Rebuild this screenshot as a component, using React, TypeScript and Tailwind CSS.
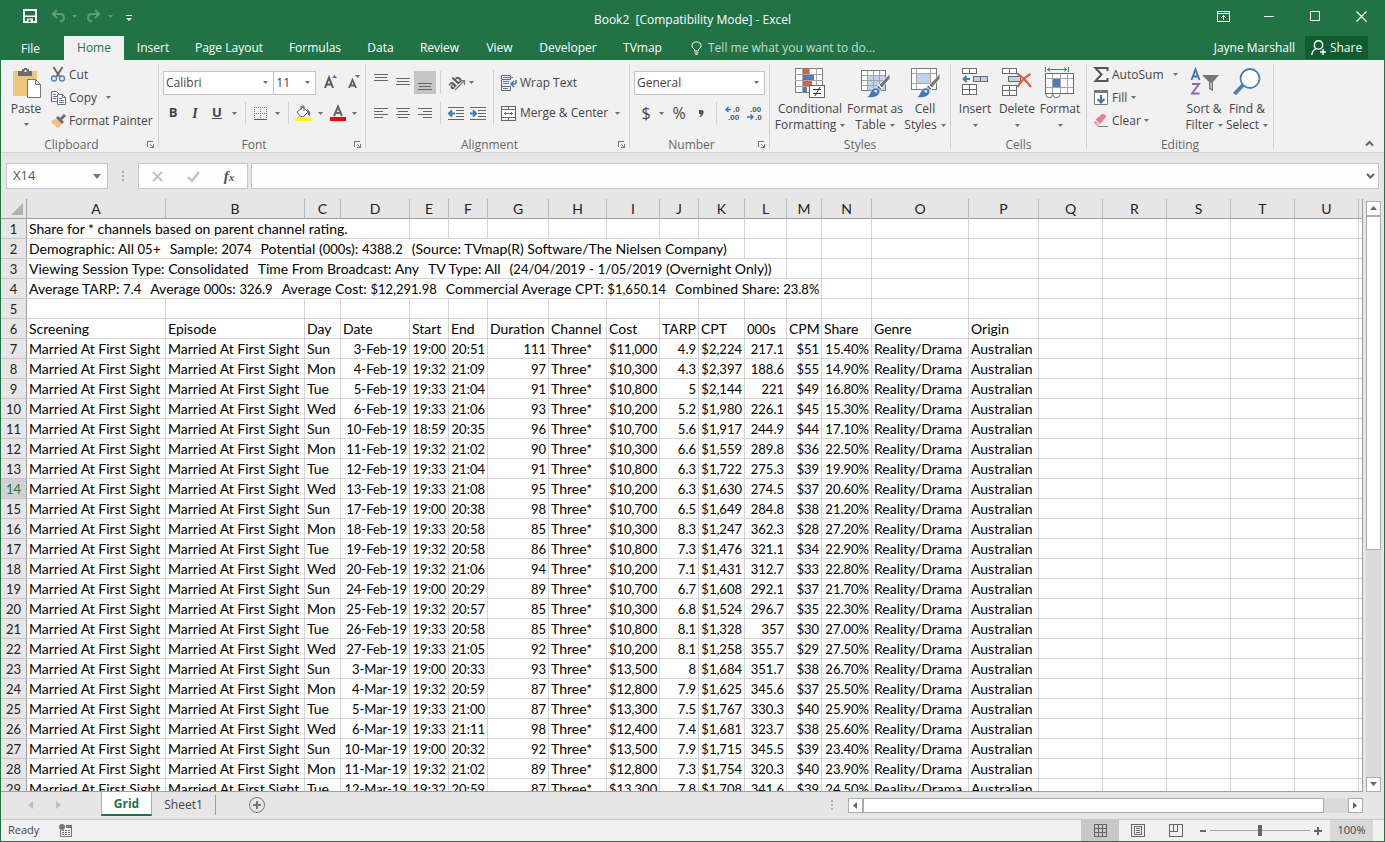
import React from 'react';

// Fuentes compartidas: interfaz y celdas
const UI_FONT = "font-['Open_Sans','Noto_Sans',sans-serif]";
const CELL_FONT = "font-['Lato','Open_Sans',sans-serif]";

/* ---------- Datos ---------- */

const TABS = [
    { label: 'Home', width: 'w-[60px]' },
    { label: 'Insert', width: 'w-[58px]' },
    { label: 'Page Layout', width: 'w-[94px]' },
    { label: 'Formulas', width: 'w-[78px]' },
    { label: 'Data', width: 'w-[53px]' },
    { label: 'Review', width: 'w-[65px]' },
    { label: 'View', width: 'w-[55px]' },
    { label: 'Developer', width: 'w-[82px]' },
    { label: 'TVmap', width: 'w-[67px]' },
];

const COLUMNS: [string, string][] = [
    ['A', 'w-[139px]'], ['B', 'w-[139px]'], ['C', 'w-[36px]'], ['D', 'w-[69px]'], ['E', 'w-[39px]'],
    ['F', 'w-[39px]'], ['G', 'w-[61px]'], ['H', 'w-[58px]'], ['I', 'w-[53px]'], ['J', 'w-[39px]'],
    ['K', 'w-[46px]'], ['L', 'w-[42px]'], ['M', 'w-[35px]'], ['N', 'w-[50px]'], ['O', 'w-[97px]'],
    ['P', 'w-[70px]'], ['Q', 'w-16'], ['R', 'w-16'], ['S', 'w-16'], ['T', 'w-16'], ['U', 'w-16'],
];

// Texto largo que ocupa varias columnas
const INTRO = [
    { parts: ['Share for * channels based on parent channel rating.'], span: 4 },
    { parts: ['Demographic: All 05+', 'Sample: 2074', 'Potential (000s): 4388.2', '(Source: TVmap(R) Software/The Nielsen Company)'], span: 11 },
    { parts: ['Viewing Session Type: Consolidated', 'Time From Broadcast: Any', 'TV Type: All', '(24/04/2019 - 1/05/2019 (Overnight Only))'], span: 12 },
    { parts: ['Average TARP: 7.4', 'Average 000s: 326.9', 'Average Cost: $12,291.98', 'Commercial Average CPT: $1,650.14', 'Combined Share: 23.8%'], span: 13 },
];

const FIELDS = ['Screening', 'Episode', 'Day', 'Date', 'Start', 'End', 'Duration', 'Channel', 'Cost', 'TARP', 'CPT', '000s', 'CPM', 'Share', 'Genre', 'Origin'];

// Day | Date | Start | End | Duration | Cost | TARP | CPT | 000s | CPM | Share
const SCREENINGS = `Sun|3-Feb-19|19:00|20:51|111|$11,000|4.9|$2,224|217.1|$51|15.40%
Mon|4-Feb-19|19:32|21:09|97|$10,300|4.3|$2,397|188.6|$55|14.90%
Tue|5-Feb-19|19:33|21:04|91|$10,800|5|$2,144|221|$49|16.80%
Wed|6-Feb-19|19:33|21:06|93|$10,200|5.2|$1,980|226.1|$45|15.30%
Sun|10-Feb-19|18:59|20:35|96|$10,700|5.6|$1,917|244.9|$44|17.10%
Mon|11-Feb-19|19:32|21:02|90|$10,300|6.6|$1,559|289.8|$36|22.50%
Tue|12-Feb-19|19:33|21:04|91|$10,800|6.3|$1,722|275.3|$39|19.90%
Wed|13-Feb-19|19:33|21:08|95|$10,200|6.3|$1,630|274.5|$37|20.60%
Sun|17-Feb-19|19:00|20:38|98|$10,700|6.5|$1,649|284.8|$38|21.20%
Mon|18-Feb-19|19:33|20:58|85|$10,300|8.3|$1,247|362.3|$28|27.20%
Tue|19-Feb-19|19:32|20:58|86|$10,800|7.3|$1,476|321.1|$34|22.90%
Wed|20-Feb-19|19:32|21:06|94|$10,200|7.1|$1,431|312.7|$33|22.80%
Sun|24-Feb-19|19:00|20:29|89|$10,700|6.7|$1,608|292.1|$37|21.70%
Mon|25-Feb-19|19:32|20:57|85|$10,300|6.8|$1,524|296.7|$35|22.30%
Tue|26-Feb-19|19:33|20:58|85|$10,800|8.1|$1,328|357|$30|27.00%
Wed|27-Feb-19|19:33|21:05|92|$10,200|8.1|$1,258|355.7|$29|27.50%
Sun|3-Mar-19|19:00|20:33|93|$13,500|8|$1,684|351.7|$38|26.70%
Mon|4-Mar-19|19:32|20:59|87|$12,800|7.9|$1,625|345.6|$37|25.50%
Tue|5-Mar-19|19:33|21:00|87|$13,300|7.5|$1,767|330.3|$40|25.90%
Wed|6-Mar-19|19:33|21:11|98|$12,400|7.4|$1,681|323.7|$38|25.60%
Sun|10-Mar-19|19:00|20:32|92|$13,500|7.9|$1,715|345.5|$39|23.40%
Mon|11-Mar-19|19:32|21:02|89|$12,800|7.3|$1,754|320.3|$40|23.90%
Tue|12-Mar-19|19:32|20:59|87|$13,300|7.8|$1,708|341.6|$39|24.50%`
    .split('\n')
    .map(line => {
        const v = line.split('|');
        return ['Married At First Sight', 'Married At First Sight', ...v.slice(0, 5), 'Three*', ...v.slice(5), 'Reality/Drama', 'Australian'];
    });

const LEFT_ALIGNED = [0, 1, 2, 7, 14, 15];

/* ---------- Piezas pequeñas ---------- */

interface IconProps {
    w: number;
    h: number;
    crisp?: boolean;
    className?: string;
    children: React.ReactNode;
}
const Icon: React.FC<IconProps> = ({ w, h, crisp, className = '', children }) => (
    <svg width={w} height={h} viewBox={`0 0 ${w} ${h}`} fill="none" shapeRendering={crisp ? 'crispEdges' : 'auto'} className={`shrink-0 overflow-visible ${className}`} aria-hidden="true">
        {children}
    </svg>
);

const Caret: React.FC<{ className?: string; color?: string }> = ({ className = '', color = '#6f6f6f' }) => (
    <Icon w={5} h={3} className={className}><path d="M0 0h5L2.5 3z" fill={color} /></Icon>
);

const Divider: React.FC<{ className?: string }> = ({ className = '' }) => (
    <span className={`w-px shrink-0 bg-[#d0d0d0] ${className}`} />
);

interface GroupProps {
    label: string;
    className: string;
    launcher?: boolean;
    children: React.ReactNode;
}
const Group: React.FC<GroupProps> = ({ label, className, launcher, children }) => (
    <section aria-label={label} className={`flex shrink-0 flex-col ${className}`}>
        <div className="flex h-[76px] shrink-0">{children}</div>
        <div className="flex h-[17px] items-center">
            <span className="flex-1 text-center text-[#666]">{label}</span>
            {launcher && (
                <button aria-label={`${label} settings`} className="flex h-4 w-4 items-center justify-center">
                    <Icon w={7} h={7} crisp><path d="M0 .5h6M.5 0v6" stroke="#777" /><path d="M3 3l3 3M6.5 3v4M3 6.5h4" stroke="#777" /></Icon>
                </button>
            )}
        </div>
    </section>
);

const SmallButton: React.FC<{ label: string; className?: string; children: React.ReactNode }> = ({ label, className = 'w-[22px]', children }) => (
    <button aria-label={label} className={`flex h-full shrink-0 items-center justify-center ${className}`}>{children}</button>
);

interface BigButtonProps {
    icon: React.ReactNode;
    lines: string[];
    className: string;
}
const BigButton: React.FC<BigButtonProps> = ({ icon, lines, className }) => (
    <button className={`flex shrink-0 flex-col items-center whitespace-nowrap pt-2 leading-4 ${className}`}>
        <span className="flex h-[33px] items-start justify-center">{icon}</span>
        <span>{lines[0]}</span>
        <span className="flex h-4 items-center gap-1">{lines[1]}<Caret /></span>
    </button>
);

const RowButton: React.FC<{ icon: React.ReactNode; label: string; caret?: string }> = ({ icon, label, caret }) => (
    <button className="flex h-[23px] items-center whitespace-nowrap">
        <span className="flex w-[18px] items-center">{icon}</span>
        <span>{label}</span>
        {caret && <Caret className={caret} />}
    </button>
);

/* ---------- Iconos ---------- */

const PasteIcon = () => (
    <Icon w={29} h={31}>
        <path d="M0 3h24v25H0z" fill="#eec67d" />
        <path d="M5 3h4V1h2V0h3v1h2v2h3v5H5z" fill="#6d6d6d" />
        <path d="M11.500 2h2v2h-2z" fill="#f0f0f0" />
        <path d="M14.5 11.5h8l5 5v13h-13z" fill="#fff" stroke="#777" />
        <path d="M22.5 11.5v5h5" stroke="#777" />
    </Icon>
);
const CutIcon = () => (
    <Icon w={14} h={15}>
        <path d="M2.500 0l6 9.500M11.500 0l-6 9.500" stroke="#6a6a6a" strokeWidth="2" />
        <circle cx="3" cy="11.5" r="2.5" stroke="#4a7ebb" strokeWidth="1.3" />
        <circle cx="11" cy="11.5" r="2.5" stroke="#4a7ebb" strokeWidth="1.3" />
    </Icon>
);
const CopyIcon = () => (
    <Icon w={16} h={14}>
        <path d="M.5.5h5l3 3v7h-8z" fill="#fff" stroke="#6f6f6f" />
        <path d="M2 3.5h3M2 5.5h4M2 7.5h3" stroke="#4a7ebb" />
        <path d="M6.5 3.5h5l3 3v7h-8z" fill="#fff" stroke="#6f6f6f" />
        <path d="M11.5 3.5v3h3" stroke="#6f6f6f" />
        <path d="M8 7.5h3M8 9.5h5M8 11.5h5" stroke="#4a7ebb" />
    </Icon>
);
const PainterIcon = () => (
    <Icon w={16} h={14}>
        <path d="M0 7l5-2 6 5-4 4-2-1-1-2-2-1z" fill="#eec07b" />
        <path d="M5 4l2-2 6 6-2 2z" fill="#6a6a6a" />
        <path d="M10 5l4-4" stroke="#6a6a6a" strokeWidth="3" />
    </Icon>
);
const GrowFontIcon = () => (
    <Icon w={14} h={16}>
        <path d="M1 13L5 2.5 9 13M2.5 9.500h5" stroke="#5a5a5a" strokeWidth="2" />
        <path d="M8 3h5l-2.500-3z" fill="#3e78b8" />
    </Icon>
);
const ShrinkFontIcon = () => (
    <Icon w={13} h={16}>
        <path d="M1 13l3.500-8L8 13M2.500 10.500h4" stroke="#5a5a5a" strokeWidth="1.800" />
        <path d="M7 0h5L9.500 3z" fill="#3e78b8" />
    </Icon>
);
const BordersIcon = () => (
    <Icon w={13} h={13} crisp>
        <path d="M0 .5h13M0 6.5h13M.5 0v12M6.5 0v12M12.5 0v12" stroke="#777" strokeDasharray="1 1" />
        <path d="M0 12.5h13" stroke="#555" />
    </Icon>
);
const FillColorIcon = () => (
    <Icon w={16} h={16}>
        <path d="M2 7l6-5 5 5-5 5-3-1z" fill="#fff" stroke="#666" />
        <path d="M6 5V1h3v5" stroke="#666" />
        <path d="M12 4q4 2 3 7l-2-1z" fill="#3e78b8" />
        <path d="M0 12h16v4H0z" fill="#ff0" />
    </Icon>
);
const FontColorIcon = () => (
    <Icon w={16} h={16}>
        <path d="M4 11L8 1.500l4 9.500M5 8h6" stroke="#666" strokeWidth="2" />
        <path d="M0 12h16v4H0z" fill="#f00" />
    </Icon>
);
const AlignIcon: React.FC<{ rows: [number, number][]; top?: number }> = ({ rows, top = 0 }) => (
    <Icon w={14} h={20} crisp>
        {rows.map(([x, len], i) => <path key={i} d={`M${x} ${top + i * 3 + 0.5}h${len}`} stroke="#666" />)}
    </Icon>
);
const OrientationIcon = () => (
    <Icon w={17} h={16}>
        <text x="-1" y="13" transform="rotate(-45 4 9)" fontSize="12" fontWeight="700" fill="#555">ab</text>
        <path d="M6 15l9-9M11 5.5h4.5V10" stroke="#777" strokeWidth="1.2" />
    </Icon>
);
const IndentIcon: React.FC<{ flip?: boolean }> = ({ flip }) => (
    <Icon w={16} h={13} crisp>
        <path d="M0 .5h16M8 3.5h8M8 6.5h8M8 9.5h8M0 12.5h16" stroke="#666" />
        <g shapeRendering="auto">
            <path d={flip ? 'M0 6.5h5M3 3.5l3 3-3 3' : 'M7 6.5H2M4 3.5l-3 3 3 3'} stroke="#3e78b8" strokeWidth="2" />
        </g>
    </Icon>
);
const WrapIcon = () => (
    <Icon w={16} h={16}>
        <path d="M.5.5h9v4h-9zM.5 4.5v11h9v-4M.5 11.5h9" stroke="#666" />
        <path d="M2 2.5h10M2 6.5h6M2 8.5h6M2 13.5h5" stroke="#4a7ebb" />
        <path d="M15 5v2.500q0 1.500-2 1.500h-2.500M13 6l-3 3 3 3" stroke="#3e78b8" strokeWidth="1.5" />
    </Icon>
);
const MergeIcon = () => (
    <Icon w={15} h={15} crisp>
        <path d="M.5.5h14v14H.5zM0 3.5h15M0 11.5h15M7.5 0v4M7.5 11v4" stroke="#666" />
        <path d="M1 4h13v7H1z" fill="#fff" />
        <path d="M3 7.5h9M4.5 6v3M10.5 6v3" stroke="#3e78b8" />
    </Icon>
);
const DECIMAL_TEXT = { fontFamily: 'Liberation Sans', fontSize: 8, fontWeight: 700, fill: '#555' };
const MoreDecimalsIcon = () => (
    <Icon w={15} h={16}>
        <path d="M6 4.500H1M3.500 2L1 4.500 3.500 7" stroke="#3e78b8" strokeWidth="1.5" />
        <text x="8" y="7" {...DECIMAL_TEXT}>.0</text>
        <text x="3" y="15" {...DECIMAL_TEXT}>.00</text>
    </Icon>
);
const LessDecimalsIcon = () => (
    <Icon w={15} h={16}>
        <text x="3" y="7" {...DECIMAL_TEXT}>.00</text>
        <text x="8" y="15" {...DECIMAL_TEXT}>.0</text>
        <path d="M0 12h5.500M3.500 9.500L6 12l-2.500 2.500" stroke="#3e78b8" strokeWidth="1.5" />
    </Icon>
);
const CondFormatIcon = () => (
    <Icon w={31} h={30} crisp>
        <path d="M.5.5h27v24H.5z" fill="#fff" stroke="#7a7a7a" />
        <path d="M0 6.5h28M0 12.5h28M0 18.5h28M7.5 0v25M14.5 0v25M21.5 0v25" stroke="#a5a5a5" />
        <path d="M8 1h6v5H8zM8 13h9v5H8z" fill="#dc6141" />
        <path d="M8 7h11v5H8zM8 19h4v5H8z" fill="#4a7ebb" />
        <path d="M14.5 17.5h15v12h-15z" fill="#fff" stroke="#666" />
        <path d="M18 21.5h8M18 25.5h8M25 19l-5 9" stroke="#333" shapeRendering="auto" />
    </Icon>
);
// Pincel que se superpone a las tablas de la galería de estilos
const Brush = () => (
    <g transform="translate(6 0)">
        <path d="M23 5.500v5l-8 9.500-3-3z" fill="#777" stroke="#fff" strokeWidth=".8" />
        <path d="M11 17l4 4-2 1.500-3.500-3.500z" fill="#6f6f6f" stroke="#fff" strokeWidth=".8" />
        <path d="M0 29c4-2 3-8 8-9 4-.5 6 3 4 6-3 4-8 4-12 3z" fill="#3e78b8" stroke="#fff" strokeWidth=".5" />
        <path d="M6.500 23q2-2 4 0l-1 2z" fill="#dbe7f5" />
    </g>
);
const FormatTableIcon = () => (
    <Icon w={29} h={30}>
        <g shapeRendering="crispEdges">
            <path d="M.5 2.5h24v20H.5z" fill="#fff" stroke="#7a7a7a" />
            <path d="M7 8h17v14H7z" fill="#bdd2ec" />
            <path d="M1 7.5h23M1 12.5h23M1 17.5h23M6.5 3v19M12.5 3v19M18.5 3v19" stroke="#a5a5a5" />
        </g>
        <Brush />
    </Icon>
);
const CellStylesIcon = () => (
    <Icon w={29} h={30}>
        <g shapeRendering="crispEdges">
            <path d="M.5.5h25v21H.5z" fill="#fff" stroke="#7a7a7a" />
            <path d="M1 5.5h24M1 15.5h24M5.5 1v20M19.5 1v20" stroke="#a5a5a5" />
            <path d="M6 6h13v9H6z" fill="#bdd2ec" />
        </g>
        <Brush />
    </Icon>
);
const InsertIcon = () => (
    <Icon w={26} h={28} crisp>
        <path d="M.5.5h14v5H.5zM.5 16.5h14v10H.5z" fill="#fff" stroke="#6a6a6a" />
        <path d="M7.5 0v6M7.5 16v11M0 21.5h15" stroke="#6a6a6a" />
        <path d="M11.5 8.5h14v5h-14z" fill="#bdd2ec" stroke="#6a6a6a" />
        <path d="M18.5 8v6" stroke="#6a6a6a" />
        <path d="M8 11H2M4.500 8L1.500 11l3 3" stroke="#3e78b8" strokeWidth="1.8" shapeRendering="auto" />
    </Icon>
);
const DeleteIcon = () => (
    <Icon w={30} h={28} crisp>
        <path d="M.5.5h14v5H.5zM.5 17.5h14v10H.5z" fill="#fff" stroke="#6a6a6a" />
        <path d="M7.5 0v6M7.5 17v11M0 22.5h15" stroke="#6a6a6a" />
        <path d="M6.5 8.5h12v5h-12z" fill="#bdd2ec" stroke="#6a6a6a" />
        <path d="M15 5.5Q22 10 29 19M28.5 6Q20 11 15.5 19" stroke="#dc6141" strokeWidth="2.2" shapeRendering="auto" />
    </Icon>
);
const FormatIcon = () => (
    <Icon w={30} h={32}>
        <g shapeRendering="crispEdges">
            <path d="M.5 5.5h28v20H.5z" fill="#fff" stroke="#6a6a6a" />
            <path d="M1 10.5h27M1 19.5h27M7.5 6v19M15.5 6v19M22.5 6v19" stroke="#a5a5a5" />
            <path d="M8 11h7v8H8z" fill="#4a7ebb" />
            <path d="M.5-1v5M23.500-1v5M2 1.5h20" stroke="#3e78b8" />
        </g>
        <path d="M5-.5l-2.500 2L5 3.500M19-.5l2.500 2-2.500 2" stroke="#3e78b8" />
        <path d="M1 26q0 4 4 3.500 2 0 2.500-3M8 26q0 4 4 3.500 3 0 3-3" fill="#fff" stroke="#6a6a6a" />
    </Icon>
);
const SigmaIcon = () => <Icon w={15} h={15}><path d="M13.500 4V1H1.500l6 6.500-6 6.500h12v-3" stroke="#555" strokeWidth="2" /></Icon>;
const FillIcon = () => (
    <Icon w={14} h={15}>
        <path d="M.5.5h13v14H.5z" fill="#fff" stroke="#777" />
        <path d="M0 0h14v3H0z" fill="#777" />
        <path d="M7 5v7M3.500 9L7 12.500 10.500 9" stroke="#3e78b8" strokeWidth="2" />
    </Icon>
);
const ClearIcon = () => (
    <Icon w={14} h={13}>
        <path d="M8 0h2l2.500 2.500L6 10 1.500 5.500z" fill="#e77f92" />
        <path d="M1 6.500L5 10.500 4 12H3L0 9V8z" fill="#eb9aaa" />
        <path d="M4 12.5h10" stroke="#777" />
    </Icon>
);
const SortIcon = () => (
    <Icon w={29} h={30}>
        <path d="M1.500 12L5.500 1.500 9.500 12M3 8.500h5" stroke="#3e78b8" strokeWidth="1.9" />
        <path d="M2 16h7L2 25.500h7.500" stroke="#9460bb" strokeWidth="1.9" />
        <path d="M12 7h17l-6 7v9l-4-2v-7z" fill="#777" />
        <path d="M20.500 14.500v5.500l1 .5v-6z" fill="#fff" />
    </Icon>
);
const FindIcon = () => (
    <Icon w={28} h={28}>
        <path d="M10 17L1.500 26" stroke="#4a7ebb" strokeWidth="4" />
        <circle cx="17" cy="10.5" r="9.500" fill="#fff" stroke="#4a7ebb" strokeWidth="1.8" />
    </Icon>
);

/* ---------- Barra de título y pestañas ---------- */

const TitleBar: React.FC = () => (
    <div className="grid h-9 shrink-0 grid-cols-[1fr_auto_1fr]">
        <div className="flex h-8 items-center pl-[22px]">
            <button aria-label="Save">
                <Icon w={14} h={14}>
                    <path d="M1 1h12v12H1z" stroke="#fff" strokeWidth="2" />
                    <path d="M2 6.5h10v1.5H2zM4 9.500h6V14H4z" fill="#fff" />
                    <path d="M5.500 10.500h2V13h-2z" fill="#217346" />
                </Icon>
            </button>
            <button aria-label="Undo" className="ml-[14px] flex items-center gap-[7px]">
                <Icon w={14} h={14}><path d="M6 1L2 5l4 4M2 5h7q4 0 4 4 0 3-4 3.500" stroke="#5f9c79" strokeWidth="2" /></Icon>
                <Caret color="#5f9c79" />
            </button>
            <button aria-label="Redo" className="ml-[10px] flex items-center gap-[7px]">
                <Icon w={14} h={14}><path d="M8 1l4 4-4 4M12 5H5Q1 5 1 9q0 3 4 3.500" stroke="#5f9c79" strokeWidth="2" /></Icon>
                <Caret color="#5f9c79" />
            </button>
            <button aria-label="Customize toolbar" className="ml-[13px] pt-1">
                <Icon w={6} h={7}><path d="M0 .5h6" stroke="#fff" /><path d="M0 3h6L3 6z" fill="#fff" /></Icon>
            </button>
        </div>
        <h1 className="self-center whitespace-pre pt-1">Book2  [Compatibility Mode] - Excel</h1>
        <div className="flex h-8 justify-end">
            <SmallButton label="Ribbon display options" className="w-[46px]">
                <Icon w={13} h={11} crisp><path d="M.5.5h12v10H.5zM0 2.5h13M6.5 4v5M5 5.5h3M4 6.5h1M8 6.5h1" stroke="#fff" /></Icon>
            </SmallButton>
            <SmallButton label="Minimize" className="w-[46px]"><Icon w={10} h={1} crisp><path d="M0 .5h10" stroke="#fff" /></Icon></SmallButton>
            <SmallButton label="Maximize" className="w-[46px]"><Icon w={10} h={10} crisp><path d="M.5.5h9v9h-9z" stroke="#fff" /></Icon></SmallButton>
            <SmallButton label="Close" className="w-[46px]"><Icon w={11} h={11}><path d="M.5.5l10 10M10.5.5l-10 10" stroke="#fff" strokeWidth="1.2" /></Icon></SmallButton>
        </div>
    </div>
);

const TabBar: React.FC = () => (
    <nav className="flex h-6 shrink-0 whitespace-nowrap pr-4">
        <button className="w-[63px] pr-1 pt-px">File</button>
        {TABS.map((tab, i) => (
            <button key={tab.label} className={`shrink-0 ${tab.width} ${i === 0 ? 'bg-[#f1f1f1] text-[#217346]' : ''}`}>{tab.label}</button>
        ))}
        <button className="ml-[15px] flex items-center gap-[6px] text-[#c4dccf]">
            <Icon w={11} h={14}><path d="M3.5 10V8.500Q1 7 1 4.800 1 1 5.500 1T10 4.800Q10 7 7.500 8.500V10zM3.500 12h4M4.500 13.500h2" stroke="#fff" /></Icon>
            Tell me what you want to do...
        </button>
        <button className="ml-auto mr-[10px]">Jayne Marshall</button>
        <button className="mb-px flex w-[63px] items-center justify-center gap-1 bg-[#0e5c2f]">
            <Icon w={15} h={15}><circle cx="7.5" cy="5" r="4.200" stroke="#fff" strokeWidth="1.4" /><path d="M5 8.500Q1 11 .8 15M9 12h6M12 9v6" stroke="#fff" strokeWidth="1.4" /></Icon>
            Share
        </button>
    </nav>
);

/* ---------- Cinta de opciones ---------- */

const SelectBox: React.FC<{ label: string; value: string; className: string }> = ({ label, value, className }) => (
    <div className={`relative h-6 border border-[#c3c3c3] bg-white ${className}`}>
        <select aria-label={label} defaultValue={value} className="h-full w-full appearance-none bg-transparent pl-[2px] outline-none">
            <option>{value}</option>
        </select>
        <Caret className="pointer-events-none absolute right-[5px] top-[9px]" />
    </div>
);

const Ribbon: React.FC = () => (
    <div className="flex h-[93px] shrink-0 border-b border-[#d2d2d2] bg-[#f1f1f1] text-[#444]">
        <Group label="Clipboard" launcher className="w-[157px]">
            <button className="flex w-[50px] shrink-0 flex-col items-center pt-2 leading-4">
                <span className="ml-[3px] h-[33px]"><PasteIcon /></span>
                Paste
                <Caret className="mt-[6px]" />
            </button>
            <div className="flex flex-col pt-[3px]">
                <RowButton icon={<CutIcon />} label="Cut" />
                <RowButton icon={<CopyIcon />} label="Copy" caret="ml-[9px]" />
                <RowButton icon={<PainterIcon />} label="Format Painter" />
            </div>
        </Group>
        <Divider className="my-1" />

        <Group label="Font" launcher className="w-[206px]">
            <div className="flex w-full flex-col pl-1 pt-[11px]">
                <div className="flex h-6 items-center">
                    <SelectBox label="Font" value="Calibri" className="w-28" />
                    <SelectBox label="Font size" value="11" className="-ml-px w-[43px]" />
                    <SmallButton label="Increase font size" className="ml-[3px] w-6"><GrowFontIcon /></SmallButton>
                    <SmallButton label="Decrease font size"><ShrinkFontIcon /></SmallButton>
                </div>
                <div className="mt-[7px] flex h-[22px] items-center">
                    <SmallButton label="Bold" className="w-5 text-[13px] font-bold">B</SmallButton>
                    <SmallButton label="Italic" className="w-6 font-['Liberation_Serif',serif] text-[14px] font-bold italic">I</SmallButton>
                    <SmallButton label="Underline" className="w-5 text-[13px] font-bold underline">U</SmallButton>
                    <Caret className="ml-[5px]" />
                    <Divider className="ml-2 h-full" />
                    <SmallButton label="Borders" className="w-[29px]"><BordersIcon /></SmallButton>
                    <Caret />
                    <Divider className="ml-2 h-full" />
                    <SmallButton label="Fill colour" className="w-7"><FillColorIcon /></SmallButton>
                    <Caret className="ml-px" />
                    <SmallButton label="Font colour" className="ml-[2px] w-[26px]"><FontColorIcon /></SmallButton>
                    <Caret className="ml-px" />
                </div>
            </div>
        </Group>
        <Divider className="my-1" />

        <Group label="Alignment" launcher className="w-[263px]">
            <div className="flex w-[127px] shrink-0 flex-col pl-1 pt-[11px]">
                <div className="flex h-[23px] items-center">
                    <SmallButton label="Top align"><AlignIcon top={1} rows={[[0, 14], [1, 12], [0, 14]]} /></SmallButton>
                    <SmallButton label="Middle align"><AlignIcon top={5} rows={[[0, 14], [1, 12], [0, 14]]} /></SmallButton>
                    <SmallButton label="Bottom align" className="w-[22px] bg-[#c5c5c5]"><AlignIcon top={10} rows={[[0, 14], [1, 12], [0, 14]]} /></SmallButton>
                    <Divider className="ml-1 h-full" />
                    <SmallButton label="Orientation" className="ml-1 w-6"><OrientationIcon /></SmallButton>
                    <Caret />
                </div>
                <div className="mt-2 flex h-[22px] items-center">
                    <SmallButton label="Align left"><AlignIcon top={5} rows={[[0, 14], [0, 9], [0, 14], [0, 9]]} /></SmallButton>
                    <SmallButton label="Center"><AlignIcon top={5} rows={[[0, 14], [2, 10], [0, 14], [2, 10]]} /></SmallButton>
                    <SmallButton label="Align right"><AlignIcon top={5} rows={[[0, 14], [5, 9], [0, 14], [5, 9]]} /></SmallButton>
                    <Divider className="ml-1 h-full" />
                    <SmallButton label="Decrease indent" className="ml-1 w-[22px]"><IndentIcon /></SmallButton>
                    <SmallButton label="Increase indent"><IndentIcon flip /></SmallButton>
                </div>
            </div>
            <Divider className="mb-[11px] mt-[10px] h-[55px]" />
            <div className="flex flex-1 flex-col whitespace-nowrap pl-[7px] pt-[11px]">
                <button className="flex h-[23px] items-center gap-[3px]"><WrapIcon />Wrap Text</button>
                <button className="mt-2 flex h-[22px] items-center gap-1 pr-[9px]"><MergeIcon />Merge &amp; Center<Caret className="ml-auto" /></button>
            </div>
        </Group>
        <Divider className="my-1" />

        <Group label="Number" launcher className="w-[139px]">
            <div className="flex flex-1 flex-col px-1 pt-[11px]">
                <SelectBox label="Number format" value="General" className="w-full" />
                <div className="mt-[7px] flex h-[22px] items-center">
                    <SmallButton label="Currency" className="w-6 text-[16px]">$</SmallButton>
                    <Caret className="ml-px" />
                    <SmallButton label="Percent" className="ml-[3px] w-6 text-[16px]">%</SmallButton>
                    <SmallButton label="Comma style" className="w-5"><Icon w={6} h={9}><path d="M1 1h3q2 0 1.500 3T1 8.500Q3 6.500 2.500 5H1z" fill="#555" /></Icon></SmallButton>
                    <Divider className="ml-[5px] h-full" />
                    <SmallButton label="Increase decimal" className="ml-1 w-[22px]"><MoreDecimalsIcon /></SmallButton>
                    <SmallButton label="Decrease decimal"><LessDecimalsIcon /></SmallButton>
                </div>
            </div>
        </Group>
        <Divider className="my-1" />

        <Group label="Styles" className="w-[180px]">
            <BigButton icon={<CondFormatIcon />} lines={['Conditional', 'Formatting']} className="ml-1 w-[72px]" />
            <BigButton icon={<FormatTableIcon />} lines={['Format as', 'Table']} className="w-[58px]" />
            <BigButton icon={<CellStylesIcon />} lines={['Cell', 'Styles']} className="w-[42px]" />
        </Group>
        <Divider className="my-1" />

        <Group label="Cells" className="w-[135px]">
            <BigButton icon={<InsertIcon />} lines={['Insert', '']} className="ml-1 w-10" />
            <BigButton icon={<DeleteIcon />} lines={['Delete', '']} className="w-11" />
            <BigButton icon={<FormatIcon />} lines={['Format', '']} className="w-[42px]" />
        </Group>
        <Divider className="my-1" />

        <Group label="Editing" className="w-[186px]">
            <div className="flex w-24 shrink-0 flex-col pl-[7px] pt-[3px]">
                <RowButton icon={<SigmaIcon />} label="AutoSum" caret="ml-[9px]" />
                <RowButton icon={<FillIcon />} label="Fill" caret="ml-1" />
                <RowButton icon={<ClearIcon />} label="Clear" caret="ml-[3px]" />
            </div>
            <BigButton icon={<SortIcon />} lines={['Sort &', 'Filter']} className="w-[42px]" />
            <BigButton icon={<FindIcon />} lines={['Find &', 'Select']} className="w-11" />
        </Group>
        <Divider className="my-1" />

        <button aria-label="Collapse the ribbon" className="mb-1 ml-auto mr-[10px] self-end">
            <Icon w={9} h={9}><path d="M1 6.5l3.500-3.500L8 6.500" stroke="#666" strokeWidth="2" /></Icon>
        </button>
    </div>
);

/* ---------- Barra de fórmulas ---------- */

const Dots: React.FC = () => (
    <Icon w={2} h={11} crisp><path d="M0 0h2v2H0zM0 4h2v2H0zM0 8h2v2H0z" fill="#b0b0b0" /></Icon>
);

const FormulaBar: React.FC = () => (
    <div className="flex h-[46px] shrink-0 items-start px-[5px] pt-[10px] text-[#555]">
        <div className="flex h-[26px] w-[102px] shrink-0 items-center border border-[#c6c6c6] bg-[#fdfdfd]">
            <input aria-label="Name box" defaultValue="X14" className="w-20 bg-transparent pl-[6px] text-[13px] outline-none" />
            <button aria-label="Open name list" className="ml-auto pr-[6px]"><Icon w={8} h={5}><path d="M0 0h8L4 5z" fill="#777" /></Icon></button>
        </div>
        <span className="flex h-[26px] w-[30px] shrink-0 items-center justify-center"><Dots /></span>
        <div className="mr-[3px] flex h-[26px] w-[110px] shrink-0 items-center border border-[#c6c6c6] bg-[#fdfdfd]">
            <SmallButton label="Cancel" className="w-9"><Icon w={11} h={11}><path d="M1 1l9 9M10 1l-9 9" stroke="#c2c2c2" strokeWidth="2" /></Icon></SmallButton>
            <SmallButton label="Enter" className="w-9"><Icon w={13} h={11}><path d="M1 6l4 4 7-9" stroke="#c2c2c2" strokeWidth="2.4" /></Icon></SmallButton>
            <SmallButton label="Insert function" className="w-9 font-['Liberation_Serif',serif] text-[15px] font-bold italic"><span>f<span className="text-[11px]">x</span></span></SmallButton>
        </div>
        <div className="flex h-[26px] flex-1 items-center border border-[#c6c6c6] bg-[#fdfdfd]">
            <input aria-label="Formula bar" className="min-w-0 flex-1 bg-transparent px-2 outline-none" />
            <button aria-label="Expand formula bar" className="pr-[3px]"><Icon w={9} h={7}><path d="M1 1l3.500 3.500L8 1" stroke="#666" strokeWidth="2" /></Icon></button>
        </div>
    </div>
);

/* ---------- Hoja ---------- */

const CELL = 'h-5 border-b border-r border-[#d4d4d4] p-0 px-[2px] whitespace-nowrap';

// Las cifras van un punto más pequeñas que las letras
const MixedText: React.FC<{ text: string }> = ({ text }) => (
    <span>
        {text.split(/([$\d][\d.,/%]*)/).map((part, i) => (i % 2 ? <span key={i} className="text-[13px]">{part}</span> : part))}
    </span>
);

const Blank: React.FC<{ count: number }> = ({ count }) => (
    <>
        {Array.from({ length: count }, (_, i) => <td key={i} className={CELL} />)}
        <td className="border-b border-[#d4d4d4] p-0" />
    </>
);

const RowHead: React.FC<{ n: number }> = ({ n }) => (
    <th scope="row" className={`h-5 border-b border-r border-b-[#c6c6c6] border-r-[#9f9f9f] p-0 text-center text-[13px] font-normal ${n === 14 ? 'bg-[#d2d2d2] text-[#217346]' : 'bg-[#e6e6e6] text-[#222]'}`}>{n}</th>
);

const Sheet: React.FC = () => (
    <div className={`min-w-0 flex-1 overflow-hidden border-b border-r border-[#9f9f9f] bg-white text-[14px] leading-[18px] text-black ${CELL_FONT}`}>
        <table className="w-full table-fixed border-separate border-spacing-0">
            <colgroup>
                <col className="w-[26px]" />
                {COLUMNS.map(([name, width]) => <col key={name} className={width} />)}
                <col />
            </colgroup>
            <thead>
                <tr className="bg-[#e6e6e6]">
                    <th className="h-5 border-b border-r border-[#9f9f9f] p-0"><Icon w={12} h={12} className="ml-auto mr-[3px]"><path d="M12 0v12H0z" fill="#b1b1b1" /></Icon></th>
                    {COLUMNS.map(([name]) => (
                        <th key={name} scope="col" className="h-5 border-b border-r border-b-[#9f9f9f] border-r-[#b8b8b8] p-0 text-center font-normal text-[#222]">{name}</th>
                    ))}
                    <th className="border-b border-[#9f9f9f] p-0" />
                </tr>
            </thead>
            <tbody>
                {INTRO.map((row, i) => (
                    <tr key={i}>
                        <RowHead n={i + 1} />
                        <td colSpan={row.span} className={CELL}>
                            <div className="flex gap-[9px]">{row.parts.map(part => <MixedText key={part} text={part} />)}</div>
                        </td>
                        <Blank count={21 - row.span} />
                    </tr>
                ))}
                <tr><RowHead n={5} /><Blank count={21} /></tr>
                <tr>
                    <RowHead n={6} />
                    {FIELDS.map(field => <td key={field} className={CELL}><MixedText text={field} /></td>)}
                    <Blank count={5} />
                </tr>
                {SCREENINGS.map((row, i) => (
                    <tr key={i}>
                        <RowHead n={i + 7} />
                        {row.map((value, c) => (
                            <td key={c} className={`${CELL} ${LEFT_ALIGNED.includes(c) ? 'text-left' : 'text-right text-[13px]'}`}>{value}</td>
                        ))}
                        <Blank count={5} />
                    </tr>
                ))}
            </tbody>
        </table>
    </div>
);

const ARROWS = {
    up: 'M0 5l3.500-4L7 5z',
    down: 'M0 1h7L3.500 5z',
    left: 'M5 0v7L1 3.500z',
    right: 'M1 0v7l4-3.500z',
};
const ScrollButton: React.FC<{ dir: keyof typeof ARROWS }> = ({ dir }) => (
    <button aria-label={`Scroll ${dir}`} className="flex h-[15px] w-[15px] shrink-0 items-center justify-center border border-[#ababab] bg-white">
        <Icon w={7} h={7}><path d={ARROWS[dir]} fill="#666" /></Icon>
    </button>
);

const SheetTabs: React.FC = () => (
    <div className="flex h-[27px] shrink-0 items-start pr-[21px]">
        <div className="flex h-[26px] w-[100px] shrink-0 items-center gap-[23px] pl-[27px]">
            <Icon w={5} h={8}><path d="M5 0v8L0 4z" fill="#c0c0c0" /></Icon>
            <Icon w={5} h={8}><path d="M0 0v8l5-4z" fill="#c0c0c0" /></Icon>
        </div>
        <button className="h-6 w-[51px] border-x border-b-2 border-x-[#ababab] border-b-[#217346] bg-white pt-[2px] text-[12px] font-bold text-[#217346]">Grid</button>
        <button className="h-6 w-[63px] pt-[2px] text-[#444]">Sheet1</button>
        <span className="mt-[3px] h-5 w-px bg-[#9f9f9f]" />
        <button aria-label="New sheet" className="ml-8 mt-1">
            <Icon w={18} h={18}><circle cx="9" cy="9" r="7.5" stroke="#777" /><path d="M9 5v8M5 9h8" stroke="#777" strokeWidth="2" /></Icon>
        </button>
        <span className="ml-auto mr-[15px] mt-2"><Dots /></span>
        <div className="mt-[6px] flex h-[15px] w-[515px] shrink-0 bg-[#dadada]">
            <ScrollButton dir="left" />
            <span className="w-[461px] border border-[#ababab] bg-white" />
            <span className="flex-1" />
            <ScrollButton dir="right" />
        </div>
    </div>
);

const StatusBar: React.FC = () => (
    <footer className="flex h-[22px] shrink-0 items-stretch border-t border-[#c6c6c6] bg-[#f1f1f1] text-[11px] text-[#444]">
        <span className="flex w-[58px] items-center pl-[7px]">Ready</span>
        <button aria-label="Record macro">
            <Icon w={14} h={13} crisp>
                <path d="M1.5 5.5v7h11v-11h-5" stroke="#777" />
                <path d="M7 1h6v3H7z" fill="#777" />
                <path d="M3 6.5h8M3 8.5h8M3 10.5h8" stroke="#777" strokeDasharray="2 1" />
                <circle cx="3" cy="3" r="3" fill="#777" shapeRendering="auto" />
            </Icon>
        </button>
        <SmallButton label="Normal view" className="ml-auto w-[38px] bg-[#c8c8c8]"><Icon w={13} h={13} crisp><path d="M.5.5h12v12H.5zM4.5 0v13M8.5 0v13M0 4.5h13M0 8.5h13" stroke="#666" /></Icon></SmallButton>
        <SmallButton label="Page layout view" className="w-[38px]"><Icon w={14} h={13} crisp><path d="M.5.5h13v12H.5zM3.5 2.5h7v8h-7zM5 4.5h4M5 6.5h4M5 8.5h4" stroke="#666" /></Icon></SmallButton>
        <SmallButton label="Page break view" className="w-[38px]"><Icon w={14} h={13} crisp><path d="M.5.5h13v12H.5zM4.5 0v7M8.5 0v7M0 7.5h9" stroke="#666" /></Icon></SmallButton>
        <SmallButton label="Zoom out" className="w-[15px]"><Icon w={6} h={2} crisp><path d="M0 0h6v2H0z" fill="#666" /></Icon></SmallButton>
        <input
            type="range"
            aria-label="Zoom"
            defaultValue={50}
            className="h-full w-[100px] appearance-none bg-transparent [&::-webkit-slider-runnable-track]:h-px [&::-webkit-slider-runnable-track]:bg-[#a5a5a5] [&::-webkit-slider-thumb]:-mt-[5px] [&::-webkit-slider-thumb]:h-[11px] [&::-webkit-slider-thumb]:w-1 [&::-webkit-slider-thumb]:appearance-none [&::-webkit-slider-thumb]:bg-[#666]"
        />
        <SmallButton label="Zoom in" className="w-4"><Icon w={8} h={8} crisp><path d="M0 3h8v2H0zM3 0h2v8H3z" fill="#666" /></Icon></SmallButton>
        <button className="ml-1 mr-[11px] w-[43px] bg-[#d8d8d8]">100%</button>
    </footer>
);

const App: React.FC = () => (
    <div className={`flex h-screen w-full flex-col overflow-hidden border-x border-b border-[#217346] bg-[#e6e6e6] text-[12px] ${UI_FONT}`}>
        <header className="shrink-0 bg-[#217346] text-white">
            <TitleBar />
            <TabBar />
        </header>
        <Ribbon />
        <FormulaBar />
        <main className="flex min-h-0 flex-1">
            <Sheet />
            <div className="mx-[3px] mt-[2px] flex w-[15px] shrink-0 flex-col bg-[#dadada]">
                <ScrollButton dir="up" />
                <span className="h-[334px] border border-[#ababab] bg-white" />
                <span className="flex-1" />
                <ScrollButton dir="down" />
            </div>
        </main>
        <SheetTabs />
        <StatusBar />
    </div>
);

export default App;
